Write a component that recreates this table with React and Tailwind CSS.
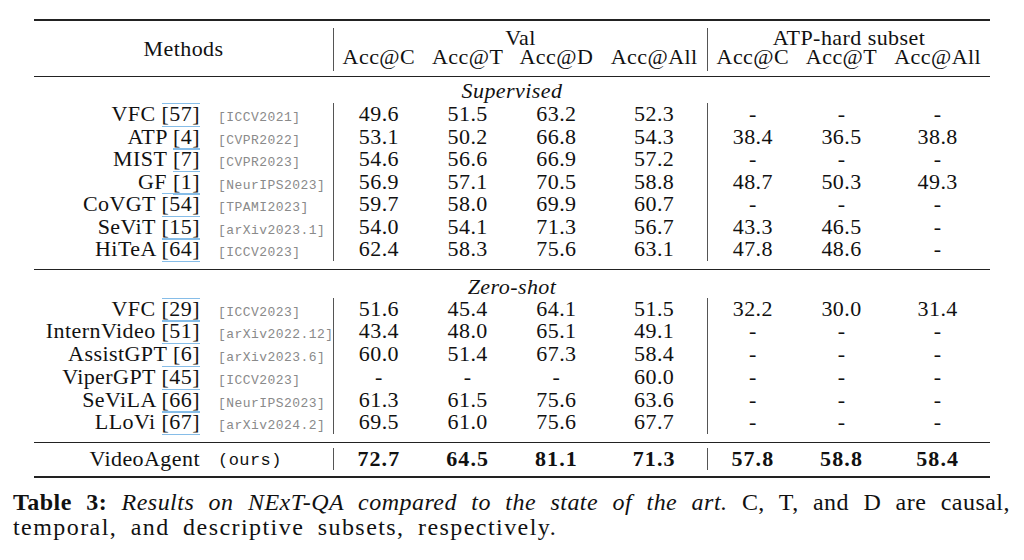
import React from 'react';

const SERIF = { fontFamily: '"Liberation Serif", "Times New Roman", serif' };
const MONO = { fontFamily: '"Liberation Mono", "Courier New", monospace' };

const SUPERVISED = [
  { name: 'VFC', cite: 57, venue: '[ICCV2021]', val: ['49.6', '51.5', '63.2', '52.3'], atp: ['-', '-', '-'] },
  { name: 'ATP', cite: 4, venue: '[CVPR2022]', val: ['53.1', '50.2', '66.8', '54.3'], atp: ['38.4', '36.5', '38.8'] },
  { name: 'MIST', cite: 7, venue: '[CVPR2023]', val: ['54.6', '56.6', '66.9', '57.2'], atp: ['-', '-', '-'] },
  { name: 'GF', cite: 1, venue: '[NeurIPS2023]', val: ['56.9', '57.1', '70.5', '58.8'], atp: ['48.7', '50.3', '49.3'] },
  { name: 'CoVGT', cite: 54, venue: '[TPAMI2023]', val: ['59.7', '58.0', '69.9', '60.7'], atp: ['-', '-', '-'] },
  { name: 'SeViT', cite: 15, venue: '[arXiv2023.1]', val: ['54.0', '54.1', '71.3', '56.7'], atp: ['43.3', '46.5', '-'] },
  { name: 'HiTeA', cite: 64, venue: '[ICCV2023]', val: ['62.4', '58.3', '75.6', '63.1'], atp: ['47.8', '48.6', '-'] },
];

const ZERO_SHOT = [
  { name: 'VFC', cite: 29, venue: '[ICCV2023]', val: ['51.6', '45.4', '64.1', '51.5'], atp: ['32.2', '30.0', '31.4'] },
  { name: 'InternVideo', cite: 51, venue: '[arXiv2022.12]', val: ['43.4', '48.0', '65.1', '49.1'], atp: ['-', '-', '-'] },
  { name: 'AssistGPT', cite: 6, venue: '[arXiv2023.6]', val: ['60.0', '51.4', '67.3', '58.4'], atp: ['-', '-', '-'] },
  { name: 'ViperGPT', cite: 45, venue: '[ICCV2023]', val: ['-', '-', '-', '60.0'], atp: ['-', '-', '-'] },
  { name: 'SeViLA', cite: 66, venue: '[NeurIPS2023]', val: ['61.3', '61.5', '75.6', '63.6'], atp: ['-', '-', '-'] },
  { name: 'LLoVi', cite: 67, venue: '[arXiv2024.2]', val: ['69.5', '61.0', '75.6', '67.7'], atp: ['-', '-', '-'] },
];

const VAL_W = ['w-[90px]', 'w-[88px]', 'w-[90px]', 'w-[106px]'];
const ATP_W = ['w-[90px]', 'w-[88px]', 'w-[105px]'];

// hyperref-style link box round the citation number
function Cite({ n }) {
  return (
    <span className="inline-block border-y border-[#86bde8] leading-[19px] pb-[3px]">[{n}]</span>
  );
}

function Row({ r, h }) {
  return (
    <div className={`flex ${h}`}>
      <div className="w-[166px] text-right whitespace-nowrap">
        {r.name} <Cite n={r.cite} />
      </div>
      <div className="ml-[18px] w-[115px] pt-[4px] text-[13px] text-[#8a8a8a] whitespace-nowrap" style={MONO}>
        {r.venue}
      </div>
      <div className="w-[374px] flex border-l border-[#555]">
        {r.val.map((v, i) => (
          <div key={i} className={`${VAL_W[i]} text-center`}>{v}</div>
        ))}
      </div>
      <div className="w-[283px] flex border-l border-[#555]">
        {r.atp.map((v, i) => (
          <div key={i} className={`${ATP_W[i]} text-center`}>{v}</div>
        ))}
      </div>
    </div>
  );
}

export default function App() {
  return (
    <div className="w-[1024px] h-[560px] overflow-hidden bg-white text-[#111]" style={SERIF}>
      <div className="ml-[34px] w-[956px] pt-[19px] text-[22px] tracking-[0.02em]">
        <div className="h-[2px] bg-[#222]" />

        {/* header */}
        <div className="flex h-[55px]">
          <div className="w-[299px] flex items-center justify-center">Methods</div>
          <div className="w-[374px] mt-[7px] mb-[5px] border-l border-[#555]">
            <div className="text-center leading-[19px]">Val</div>
            <div className="flex leading-[20px]">
              {['Acc@C', 'Acc@T', 'Acc@D', 'Acc@All'].map((t, i) => (
                <div key={t} className={`${VAL_W[i]} text-center whitespace-nowrap`}>{t}</div>
              ))}
            </div>
          </div>
          <div className="w-[283px] mt-[7px] mb-[5px] border-l border-[#555]">
            <div className="text-center leading-[19px]">ATP-hard subset</div>
            <div className="flex leading-[20px]">
              {['Acc@C', 'Acc@T', 'Acc@All'].map((t, i) => (
                <div key={t} className={`${ATP_W[i]} text-center whitespace-nowrap`}>{t}</div>
              ))}
            </div>
          </div>
        </div>
        <div className="h-px bg-[#222]" />

        {/* supervised */}
        <div className="mt-[2px] h-[24px] leading-[24px] text-center italic">Supervised</div>
        <div className="leading-[22.5px]">
          {SUPERVISED.map((r) => (
            <Row key={r.name + r.cite} r={r} h="h-[22.5px]" />
          ))}
        </div>
        <div className="mt-[8px] h-px bg-[#222]" />

        {/* zero-shot */}
        <div className="mt-[6px] h-[22px] leading-[22px] text-center italic">Zero-shot</div>
        <div className="leading-[22.8px]">
          {ZERO_SHOT.map((r) => (
            <Row key={r.name + r.cite} r={r} h="h-[22.8px]" />
          ))}
        </div>
        <div className="mt-[7.5px] h-px bg-[#222]" />

        {/* ours */}
        <div className="mt-[5px] flex h-[22.5px] leading-[22.5px]">
          <div className="w-[166px] text-right">VideoAgent</div>
          <div className="ml-[18px] w-[115px] pt-[3px] text-[17px] leading-[19px]" style={MONO}>
            (ours)
          </div>
          <div className="w-[374px] flex border-l border-[#555] font-bold tracking-[0.05em]">
            {['72.7', '64.5', '81.1', '71.3'].map((v, i) => (
              <div key={i} className={`${VAL_W[i]} text-center`}>{v}</div>
            ))}
          </div>
          <div className="w-[283px] flex border-l border-[#555] font-bold tracking-[0.05em]">
            {['57.8', '58.8', '58.4'].map((v, i) => (
              <div key={i} className={`${ATP_W[i]} text-center`}>{v}</div>
            ))}
          </div>
        </div>
        <div className="mt-[5.7px] h-[2px] bg-[#222]" />
      </div>

      {/* caption */}
      <div className="ml-[13px] w-[997px] mt-[12px] text-[24px] leading-[25.5px]">
        <div className="text-justify [text-align-last:justify] whitespace-nowrap tracking-[0.02em]">
          <span className="font-bold">Table 3:</span>{' '}
          <span className="italic">Results on NExT-QA compared to the state of the art.</span> C, T, and D are causal,
        </div>
        <div className="tracking-[0.06em] [word-spacing:6px]">temporal, and descriptive subsets, respectively.</div>
      </div>
    </div>
  );
}
